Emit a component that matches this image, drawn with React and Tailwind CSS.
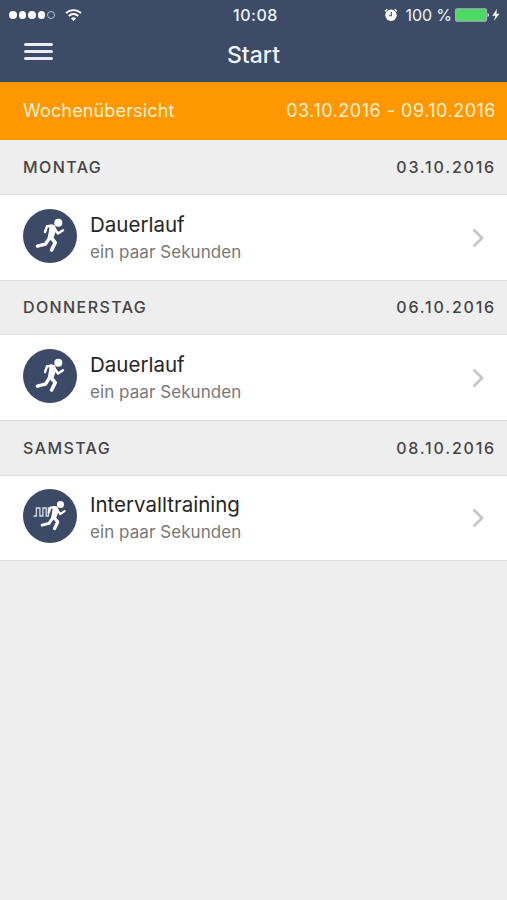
const days = [
  { day: 'MONTAG', date: '03.10.2016', title: 'Dauerlauf', head: 'h-[55px]', row: 'h-[86px]' },
  { day: 'DONNERSTAG', date: '06.10.2016', title: 'Dauerlauf', head: 'h-[54px] pb-px', row: 'h-[86px]' },
  { day: 'SAMSTAG', date: '08.10.2016', title: 'Intervalltraining', interval: true, head: 'h-[55px]', row: 'h-[85px]' },
];

function Runner({ interval }) {
  return (
    <svg viewBox="0 0 54 54" className="h-[54px] w-[54px] shrink-0" fill="none" stroke="#fff" strokeLinecap="round" strokeLinejoin="round">
      <circle cx="27" cy="27" r="27" fill="#3c4a68" stroke="none" />
      {interval && (
        <path d="M11 27h2.4v-8h3.5v8h3v-8h3.3v8h2.2v-8h2.4" stroke="#d5dcec" strokeWidth="1.3" strokeLinejoin="miter" />
      )}
      <g transform={interval ? 'translate(6.4 3.4) scale(.88)' : undefined}>
        <circle cx="35.3" cy="13.8" r="4" fill="#fff" stroke="none" />
        <path d="M27.5 16.4 31 17 32.4 20.5 29.8 28 25.6 29 27 22Z" fill="#fff" strokeWidth="2" />
        <path d="M29 16.8 24 17.3 22 23" strokeWidth="2.4" />
        <path d="M31.2 19 35 24.6 40 21.3" strokeWidth="2.4" />
        <path d="M28 28.5 32.2 33.7 28.6 41" strokeWidth="3.6" />
        <path d="M26.8 28.6 22.3 35.2 14.4 37.2" strokeWidth="3.4" />
      </g>
    </svg>
  );
}

function StatusBar() {
  return (
    <div className="flex h-[30px] items-center justify-between pl-[9px] pr-[6px] text-[#eff3fb]">
      <div className="flex w-[178px] items-center gap-[2px]">
        {[0, 1, 2, 3].map((i) => (
          <span key={i} className="h-[7.5px] w-[7.5px] rounded-full bg-white" />
        ))}
        <span className="h-[8px] w-[8px] rounded-full border border-[#b9c1d2]" />
        <svg viewBox="0 0 17 14" className="ml-[8px] h-[14px] w-[17px]" fill="none" stroke="#fff" strokeWidth="1.9">
          <path d="M1 5.2a10.6 10.6 0 0 1 15 0M3.8 8a6.7 6.7 0 0 1 9.4 0" />
          <path d="M8.5 13 6 10.4a3.6 3.6 0 0 1 5 0Z" fill="#fff" stroke="none" />
        </svg>
      </div>
      <div className="pl-px text-[16px] font-medium tracking-[0.55px]">10:08</div>
      <div className="flex w-[178px] items-center justify-end">
        <svg viewBox="0 0 14 14" className="h-[14px] w-[14px]" fill="none" stroke="#fff">
          <circle cx="7" cy="7.3" r="5.7" fill="#fff" stroke="none" />
          <path d="M1 3.2 3.3 1.3M13 3.2l-2.3-1.9" strokeWidth="1.3" />
          <path d="M7.3 3.8v3.9H4.8" stroke="#3d4b66" strokeWidth="1.1" />
        </svg>
        <span className="ml-[8px] whitespace-nowrap text-[16px] tracking-[-0.1px]">100 %</span>
        <svg viewBox="0 0 46 14" className="ml-[3px] h-[14px] w-[46px]">
          <rect x=".6" y=".8" width="31" height="12.4" rx="1.5" fill="#4cd964" stroke="#a5adbc" strokeWidth="1.1" />
          <path d="M32.6 5c1.6.4 1.6 3.6 0 4Z" fill="#fff" />
          <path d="M42 1 37.3 7.7h3.1L38.8 13l5.7-7.2h-3.1Z" fill="#fff" />
        </svg>
      </div>
    </div>
  );
}

export default function App() {
  return (
    <main className="min-h-screen bg-[#eeeeee] font-['Inter','Liberation_Sans',sans-serif]">
      <header className="h-[82px] border-b border-[#42475a] bg-[#3d4b66]">
        <StatusBar />
        <div className="flex h-[49px] items-center justify-between px-[24px]">
          <button aria-label="Menu" className="mb-[6px] flex w-[29px] flex-col gap-[4px]">
            <span className="h-[3px] rounded-xs bg-[#e8ecf4]" />
            <span className="h-[3px] rounded-xs bg-[#e8ecf4]" />
            <span className="h-[3px] rounded-xs bg-[#e8ecf4]" />
          </button>
          <h1 className="pt-px text-[23px] font-medium text-[#edf2fa]">Start</h1>
          <span className="w-[29px]" />
        </div>
      </header>
      <div className="flex h-[58px] items-center justify-between bg-[#ff9800] pb-px pl-[23px] pr-[11px] text-[18px] text-[#fff0d2]">
        <span className="tracking-[0.15px]">Wochenübersicht</span>
        <span className="tracking-[0.5px]">03.10.2016 - 09.10.2016</span>
      </div>
      {days.map((d) => (
        <section key={d.day}>
          <div className={`flex ${d.head} items-center justify-between border-b border-[#dedede] pl-[23px] pr-[11px] text-[16px] font-medium text-[#444]`}>
            <span className="tracking-[1.4px]">{d.day}</span>
            <span className="tracking-[1.8px]">{d.date}</span>
          </div>
          <div className={`flex ${d.row} items-center border-b border-[#dadada] bg-white pl-[22.5px] pr-[23px] pb-[4px]`}>
            <Runner interval={d.interval} />
            <div className="ml-[13.5px] mt-[4px] flex-1">
              <div className="text-[20.5px] leading-[28px] text-[#252525]">{d.title}</div>
              <div className="text-[17px] leading-[26px] tracking-[0.06px] text-[#777]">ein paar Sekunden</div>
            </div>
            <svg viewBox="0 0 12 20" className="mt-[4px] h-[20px] w-[12px]" fill="none" stroke="#c5c5c7" strokeWidth="2.7">
              <path d="m1.5 1.5 8.5 8.5-8.5 8.5" />
            </svg>
          </div>
        </section>
      ))}
    </main>
  );
}
